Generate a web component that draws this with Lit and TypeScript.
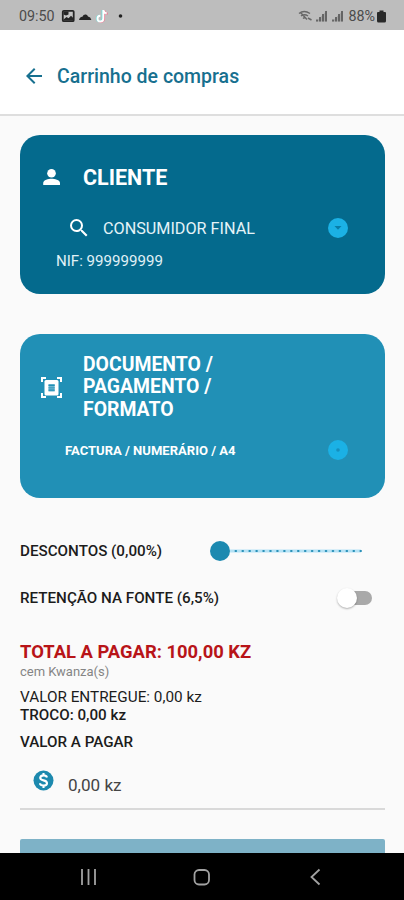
import { LitElement, html, css } from "lit";
import { customElement } from "lit/decorators.js";

@customElement("app-root")
export class AppRoot extends LitElement {
  static styles = css`
    :host {
      display: flex;
      flex-direction: column;
      width: 404px;
      height: 900px;
      overflow: hidden;
      background: #fafafa;
      color: #1c1c1c;
      font-family: Roboto, "Liberation Sans", sans-serif;
      white-space: nowrap;
    }
    * { box-sizing: border-box; }
    svg { display: block; flex: none; }
    .status {
      flex: none;
      height: 30px;
      display: flex;
      align-items: center;
      padding: 1px 18px 0 19px;
      background: #bdbdbd;
      color: #4c4c4c;
      font-size: 14.3px;
    }
    .clock { width: 42px; }
    .push { margin-left: auto; }
    .level { margin-left: 3px; }
    .battery { margin-left: 2px; }
    .appbar {
      flex: none;
      height: 86px;
      display: flex;
      align-items: center;
      padding: 8px 0 0 22px;
      gap: 11px;
      background: #fff;
      border-bottom: 2px solid #dedede;
      color: #17708f;
      font-size: 19.5px;
      font-weight: 500;
    }
    main {
      flex: 1;
      min-height: 0;
      overflow: hidden;
      padding: 19px 19px 0 20px;
    }
    .card {
      border-radius: 20px;
      color: #fff;
    }
    .client { height: 159px; background: #046a8d; padding-top: 25px; }
    .doc { height: 164px; background: #2190b6; margin-top: 40px; padding-top: 20px; }
    .head { display: flex; align-items: center; height: 34px; padding-left: 20px; }
    .head svg { margin-right: 19px; }
    .title { font-size: 21.5px; font-weight: 700; }
    .pick { display: flex; align-items: center; height: 34px; padding: 0 37px 0 47px; margin-top: 17px; color: #e4f3f8; }
    .pick .name { font-size: 16.2px; margin-left: 12px; }
    .nif { font-size: 15.1px; line-height: 20px; margin-top: 6px; padding-left: 36px; color: #e0f1f7; }
    .tall { height: 67px; }
    .tall .title { font-size: 19.4px; line-height: 22.3px; }
    .kind { display: flex; align-items: center; height: 24px; margin-top: 17px; padding: 0 37px 0 45px; }
    .kind .name { font-size: 13.05px; font-weight: 700; }
    .line { display: flex; align-items: center; height: 30px; font-size: 15.2px; font-weight: 500; }
    .discount { margin-top: 38px; }
    .retention { margin-top: 17px; }
    .slider { display: flex; align-items: center; margin-left: auto; padding-right: 23px; }
    .knob { width: 20px; height: 20px; border-radius: 50%; background: #1c89b0; }
    .switch { position: relative; width: 32px; height: 14px; margin-left: auto; margin-right: 13px; border-radius: 7px; background: #a9a9a9; }
    .switch::before {
      content: "";
      position: absolute;
      left: -3px;
      top: -3px;
      width: 20px;
      height: 20px;
      border-radius: 50%;
      background: #fff;
      box-shadow: 0 1px 2px rgba(0, 0, 0, 0.3);
    }
    .total { margin-top: 27px; height: 24px; line-height: 24px; font-size: 18.4px; font-weight: 700; color: #b81418; }
    .words { height: 15px; line-height: 15px; font-size: 13px; color: #858585; }
    .paid { margin-top: 9px; height: 18px; line-height: 18px; font-size: 15.3px; }
    .change { height: 18px; line-height: 18px; font-size: 15.2px; font-weight: 500; }
    .due { margin-top: 9px; height: 18px; line-height: 18px; font-size: 15.2px; font-weight: 500; }
    .field { display: flex; height: 59px; padding: 19px 0 0 13px; border-bottom: 2px solid #d9d9d9; font-size: 17.1px; color: #444; }
    .field span { margin: 5px 0 0 14px; line-height: 20px; }
    .submit { height: 48px; margin-top: 29px; border-radius: 2px; background: #7eb2c7; }
    .nav { flex: none; height: 47px; display: flex; align-items: center; padding-left: 79px; background: #000; }
  `;

  private drop(arrow: boolean) {
    return html`<svg class="push" width="20" height="20" viewBox="0 0 20 20">
      <circle cx="10" cy="10" r="10" fill="#1bb1e5" />
      ${arrow
        ? html`<svg width="20" height="20" viewBox="0 0 20 20"><path d="M6.500 8h7L10 11.800z" fill="#087da8" /></svg>`
        : html`<svg width="20" height="20" viewBox="0 0 20 20"><circle cx="10" cy="10" r="1.800" fill="#168fbe" /></svg>`}
    </svg>`;
  }

  render() {
    return html`
      <div class="status">
        <span class="clock">09:50</span>
        <svg width="64" height="16" viewBox="0 0 64 16">
          <rect x="1.800" y="2.800" width="10.900" height="10.400" rx="1" fill="#c4c4c4" stroke="#252525" stroke-width="1.800" />
          <path fill="#252525" d="M2.500 3.500h5v3l-2.500 1-2.500-1zM2.500 11.500l3-2.500 2 1.300 2.500-2.500 2.500 2.500v2.200h-10z" />
          <path fill="#252525" d="M18 12q.5-3 3.400-3.200Q22.500 6 25 6.500q1.500.3 2 2 2.700.4 3.400 3.500z" />
          <g fill="none" stroke-width="1.900">
            <path stroke="#6fdedb" d="M41.500 2v8.300a2.800 2.800 0 1 1-3-2.600" />
            <path stroke="#ef7791" d="M43.200 2.500q.7 3 3.500 3.200M43 6v5a3 3 0 0 1-4.500 2.500" />
            <path stroke="#fff" d="M42.300 2v8.500a2.900 2.900 0 1 1-3-2.800M42.400 2.500q.7 2.500 3.300 2.700" />
          </g>
          <circle cx="59.500" cy="8" r="1.800" fill="#222" />
        </svg>
        <svg class="push" width="47" height="16" viewBox="0 0 47 16">
          <g fill="none" stroke="#686868" stroke-width="1.500">
            <path d="M1 5.500q5-4 11 0M3 8q3.500-2.600 7 0M5 10.500q1.600-1.300 3.200 0M2.500 4.500l6.500 7M10 10l3.500 2" />
          </g>
          <path fill="#a5a5a5" d="M18 13.500L29 2.500v11zM34 13.500L45 2.500v11z" />
          <path stroke="#555" stroke-width="1.600" d="M19 13.500v-2M22 13.500V9M25 13.500V6M28 13.500V3M35 13.500v-2M38 13.500V9M41 13.500V6M44 13.500V3" />
        </svg>
        <span class="level">88%</span>
        <svg class="battery" width="9" height="14" viewBox="0 0 9 14"><path fill="#292929" d="M2.500 1.500h4V3H8q1 0 1 1v8q0 1.500-1.500 1.500h-6Q0 13.500 0 12V4q0-1 1-1h1.500z" /></svg>
      </div>

      <header class="appbar">
        <svg width="24" height="24" viewBox="0 0 24 24"><path fill="#17708f" d="M20 11H7.830l5.590-5.590L12 4l-8 8 8 8 1.410-1.410L7.830 13H20z" /></svg>
        <span>Carrinho de compras</span>
      </header>

      <main>
        <section class="card client">
          <div class="head">
            <svg width="24" height="24" viewBox="0 0 24 24" fill="#fff"><circle cx="11.500" cy="8.200" r="4.300" /><path d="M3.200 20v-2c0-3 5.300-4.300 8.300-4.300s8.500 1.300 8.500 4.300v2z" /></svg>
            <span class="title">CLIENTE</span>
          </div>
          <div class="pick">
            <svg width="24" height="24" viewBox="0 0 24 24"><path fill="#fff" d="M15.500 14h-.79l-.28-.27A6.470 6.470 0 0 0 16 9.500 6.500 6.500 0 1 0 9.500 16c1.610 0 3.090-.59 4.230-1.570l.27.28v.79l5 4.990L20.490 19zm-6 0a4.500 4.500 0 1 1 0-9 4.500 4.500 0 0 1 0 9z" /></svg>
            <span class="name">CONSUMIDOR FINAL</span>
            ${this.drop(true)}
          </div>
          <div class="nif">NIF: 999999999</div>
        </section>

        <section class="card doc">
          <div class="head tall">
            <svg width="24" height="24" viewBox="0 0 24 24">
              <path fill="none" stroke="#fff" stroke-width="2" d="M2 6V2h4M17 2h4v4M21 17v4h-4M6 21H2v-4" />
              <rect x="4.500" y="4" width="14" height="15.500" rx="1.500" fill="#fff" />
              <rect x="8.500" y="8" width="6.200" height="7.500" fill="#6fb7d0" />
              <path stroke="#2190b6" stroke-width="1.300" d="M8.500 9.300h6.200M8.500 14.200h6.200" />
              <path stroke="#3b9dbf" stroke-width="1.200" d="M8.500 11.800h6.200" />
            </svg>
            <span class="title">DOCUMENTO /<br />PAGAMENTO /<br />FORMATO</span>
          </div>
          <div class="kind">
            <span class="name">FACTURA / NUMERÁRIO / A4</span>
            ${this.drop(false)}
          </div>
        </section>

        <div class="line discount">
          <span>DESCONTOS (0,00%)</span>
          <div class="slider">
            <div class="knob"></div>
            <svg width="132" height="4" viewBox="0 0 132 4">
              <path stroke="#b5e2f5" stroke-width="3" d="M0 2h131" />
              <path stroke="#2b91b8" stroke-width="2" stroke-linecap="round" stroke-dasharray="0.600 6.340" d="M5.500 2H131" />
            </svg>
          </div>
        </div>
        <div class="line retention">
          <span>RETENÇÃO NA FONTE (6,5%)</span>
          <div class="switch"></div>
        </div>

        <div class="total">TOTAL A PAGAR: 100,00 KZ</div>
        <div class="words">cem Kwanza(s)</div>
        <div class="paid">VALOR ENTREGUE: 0,00 kz</div>
        <div class="change">TROCO: 0,00 kz</div>
        <div class="due">VALOR A PAGAR</div>
        <div class="field">
          <svg width="21" height="21" viewBox="0 0 21 21">
            <circle cx="10.500" cy="10.500" r="10" fill="#1c89ae" />
            <path fill="none" stroke="#fff" stroke-width="2.100" d="M14 7.500Q13.300 5.400 10.500 5.400T7.200 7.800Q7.200 9.700 10.500 10.400T14 13.200Q14 15.500 10.500 15.500T7 13.200M10.500 3v2.500M10.500 15.500V18" />
          </svg>
          <span>0,00 kz</span>
        </div>
        <div class="submit"></div>
      </main>

      <nav class="nav">
        <svg width="246" height="24" viewBox="0 0 246 24" fill="none" stroke="#a2a2a2" stroke-width="1.800">
          <path d="M3 4v16M9.500 4v16M16 4v16" />
          <rect x="115.500" y="5" width="14.500" height="14.500" rx="4.500" />
          <path d="M240.500 4.500l-8 7.500 8 7.500" />
        </svg>
      </nav>
    `;
  }
}
